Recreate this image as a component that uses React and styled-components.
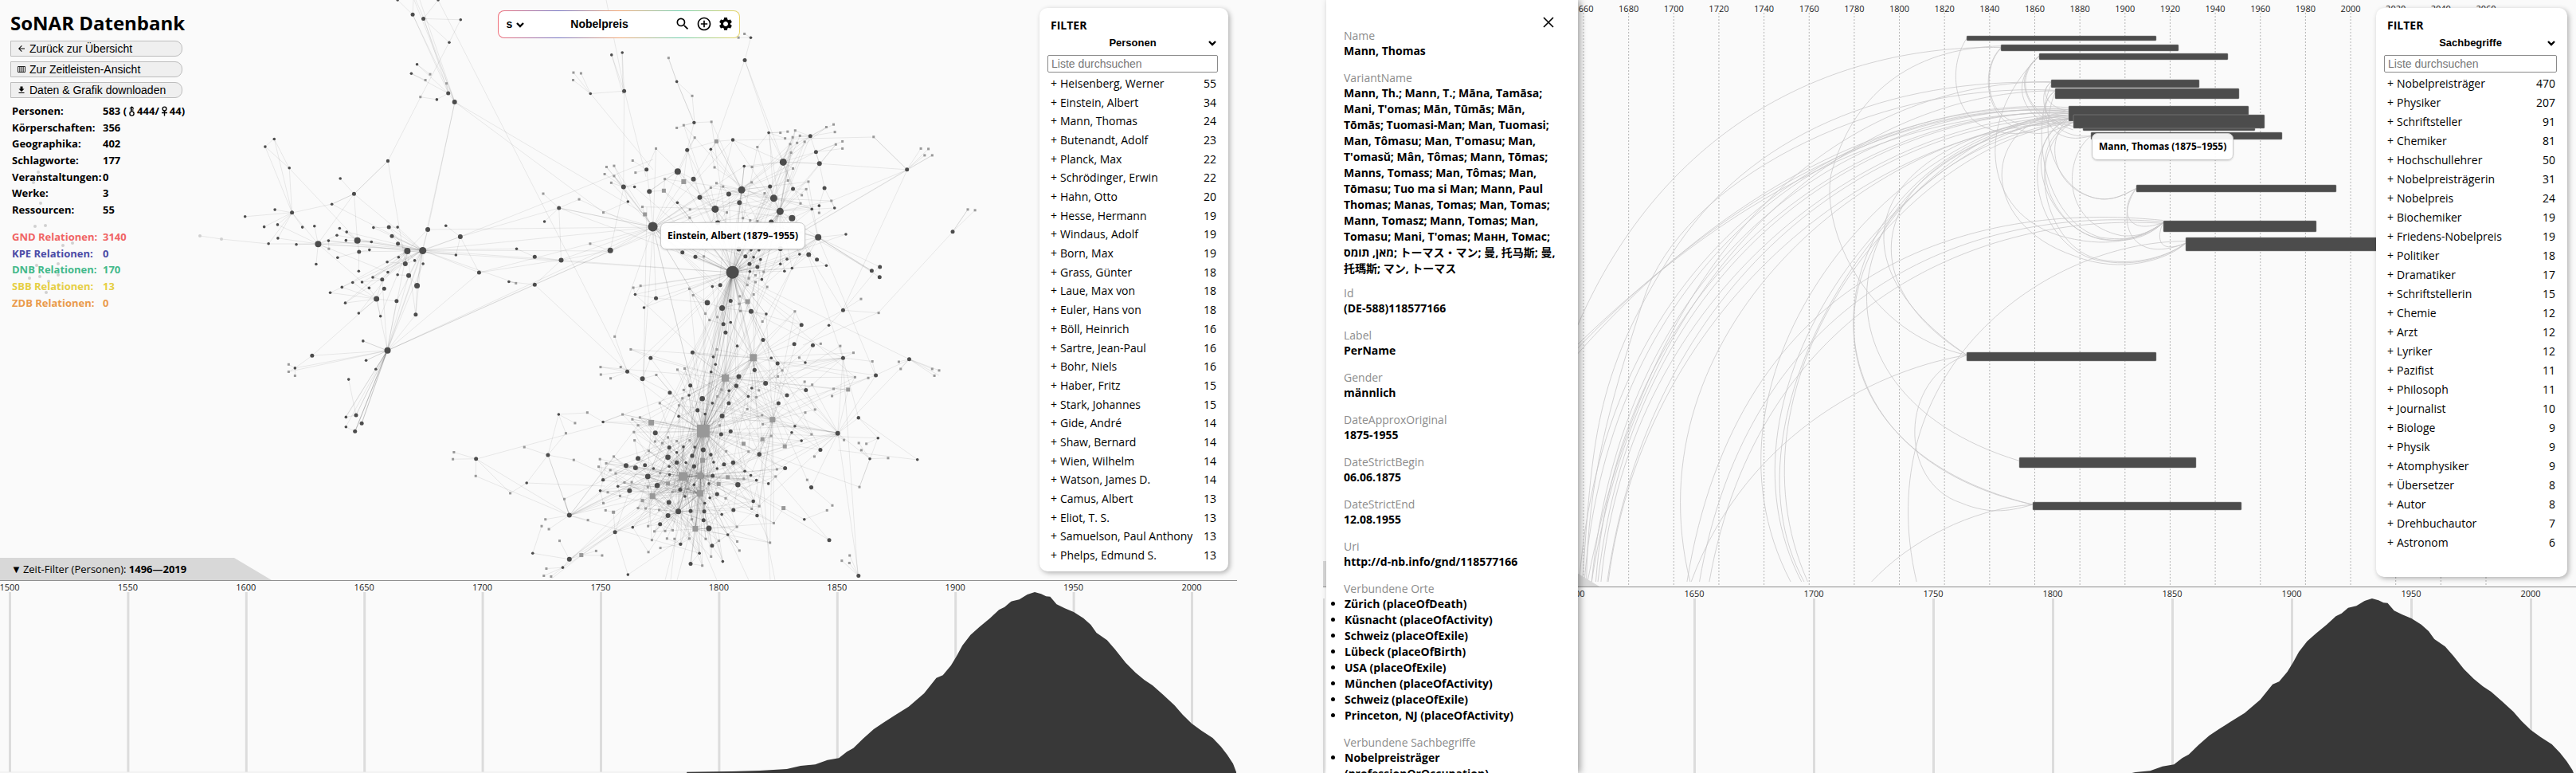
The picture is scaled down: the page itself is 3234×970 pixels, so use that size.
import React from "react";
import styled, { createGlobalStyle } from "styled-components";
import { MdSearch, MdAddCircleOutline, MdSettings, MdArrowBack, MdGetApp } from "react-icons/md";

const Global = createGlobalStyle`
  * { box-sizing: border-box; }
  body {
    margin: 0;
    background: #fafafa;
    color: #000;
    font-family: "Open Sans", "Noto Sans CJK JP", "Noto Sans CJK SC", sans-serif;
  }
`;

/* ---------- layout ---------- */

const Page = styled.main`
  display: grid;
  grid-template-columns: 1553fr 1573fr;
  column-gap: 108px;
  height: 100vh;
  overflow: hidden;
`;

const View = styled.section`
  display: grid;
  grid-template-rows: minmax(0, 1fr) ${(p) => p.$timeline}px;
  min-width: 0;
  height: 100vh;
`;

const Layers = styled.div`
  display: grid;
  grid-template-columns: minmax(0, 1fr);
  grid-template-rows: minmax(0, 1fr);
  position: relative;
  min-width: 0;
  min-height: 0;
  & > * { grid-area: 1 / 1; }
`;

const Drawing = styled.svg`
  display: block;
  width: 100%;
  height: 100%;
  overflow: hidden;
`;

const Overlay = styled.div`
  display: grid;
  grid-template-columns: 1fr auto 1fr;
  align-items: start;
  z-index: 1;
`;

const OverlayEnd = styled(Overlay)`
  grid-template-columns: 1fr;
`;

const Timeline = styled.div`
  min-width: 0;
  min-height: 0;
  border-top: 1px solid #8f8f8f;
  overflow: hidden;
`;

/* ---------- sidebar ---------- */

const Sidebar = styled.div`
  display: flex;
  flex-direction: column;
  width: 240px;
  padding: 12px 0 0 13px;
`;

const Title = styled.h1`
  margin: 0 0 6px;
  font-size: 24px;
  line-height: 33px;
  white-space: nowrap;
`;

const ActionButton = styled.button`
  display: flex;
  align-items: center;
  gap: 4px;
  width: 216px;
  height: 20px;
  margin-bottom: 6px;
  padding: 0 7px;
  border: 1px solid #bdbdbd;
  border-radius: 0 9px 9px 0;
  background: #efefef;
  color: #000;
  font: 14px "Liberation Sans", Arial, sans-serif;
  white-space: nowrap;
  svg { flex: none; }
`;

const Stats = styled.table`
  height: ${(p) => p.$height}px;
  margin: ${(p) => p.$top}px 0 0 2px;
  border-collapse: collapse;
  font-size: 13px;
  line-height: 18px;
  font-weight: 700;
  white-space: nowrap;
  th, td { padding: 0; text-align: left; }
  th { width: 114px; min-width: 114px; }
`;

const StatRow = styled.tr`
  color: ${(p) => p.$color || "#000"};
`;

const Sign = styled.svg`
  width: 9px;
  height: 13px;
  margin: 0 2px;
  vertical-align: -2px;
`;

/* ---------- search bar ---------- */

const SearchBar = styled.form`
  display: flex;
  align-items: center;
  width: 304px;
  height: 35px;
  margin-top: 13px;
  padding: 0 7px 2px 10px;
  border: 1px solid transparent;
  border-radius: 8px;
  background:
    linear-gradient(#fff, #fff) padding-box,
    linear-gradient(90deg, #f0707a, #7777c4 25%, #f2a878 50%, #74cfae 75%, #e8d468) border-box;
`;

const SearchName = styled.input`
  flex: 1;
  min-width: 0;
  padding: 0 6px 0 0;
  border: 0;
  background: none;
  text-align: center;
  font: 700 14px "Liberation Sans", Arial, sans-serif;
`;

const IconButton = styled.button`
  display: flex;
  padding: 0;
  margin-left: 7px;
  border: 0;
  background: none;
  color: #000;
`;

/* ---------- selects and filter card ---------- */

const SelectBox = styled.div`
  position: relative;
  width: ${(p) => (p.$small ? "36px" : "100%")};
  select {
    display: block;
    width: 100%;
    height: 18px;
    padding: 0 ${(p) => (p.$small ? 0 : 4)}px;
    border: 0;
    background: none;
    appearance: none;
    color: #000;
    font: 700 ${(p) => (p.$small ? 14 : 13)}px "Liberation Sans", Arial, sans-serif;
    text-align-last: ${(p) => (p.$small ? "left" : "center")};
  }
  svg {
    position: absolute;
    right: ${(p) => (p.$small ? 14 : 2)}px;
    top: 7px;
    pointer-events: none;
  }
`;

const FilterCard = styled.aside`
  display: flex;
  flex-direction: column;
  justify-self: end;
  width: ${(p) => p.$width}px;
  height: ${(p) => p.$height}px;
  margin: 10px 11px 0 0;
  padding: 12px ${(p) => p.$right}px 8px 10px;
  border-radius: 10px;
  background: #fff;
  box-shadow: 2px 2px 6px rgba(0, 0, 0, 0.3);
`;

const FilterTitle = styled.h2`
  margin: 0 0 2px 4px;
  font-size: 14px;
  line-height: 20px;
`;

const FilterInput = styled.input`
  width: 100%;
  height: 22px;
  margin: 7px 0 2px;
  padding: 0 4px;
  border: 1px solid #8a8a8a;
  border-radius: 2px;
  background: #fff;
  font: 14px "Liberation Sans", Arial, sans-serif;
  &::placeholder { color: #777; }
`;

const FilterList = styled.ul`
  flex: 1;
  display: grid;
  grid-auto-rows: ${(p) => (p.$fill ? "1fr" : "24px")};
  margin: 0;
  padding: 0 2px 0 4px;
  list-style: none;
  font-size: 14px;
  line-height: 20px;
`;

const FilterItem = styled.li`
  display: grid;
  grid-template-columns: 12px 1fr auto;
  align-items: center;
  white-space: nowrap;
`;

/* ---------- tooltip, tab, details ---------- */

const Tooltip = styled.div`
  position: absolute;
  left: ${(p) => p.$x}px;
  top: ${(p) => p.$y}px;
  z-index: 1;
  padding: 6px 8px;
  border: 1px solid #c9c9c9;
  border-radius: 7px;
  background: rgba(255, 255, 255, 0.92);
  box-shadow: 0 1px 2px rgba(0, 0, 0, 0.15);
  font-size: 12px;
  line-height: 20px;
  font-weight: 700;
  white-space: nowrap;
`;

const TimeTab = styled.button`
  align-self: end;
  justify-self: start;
  display: flex;
  align-items: center;
  gap: 2px;
  width: 341px;
  height: 28px;
  padding: 0 0 0 14px;
  border: 0;
  background: #d8d8d8;
  clip-path: polygon(0 0, 294px 0, 100% 100%, 0 100%);
  color: #000;
  font: 13px "Open Sans", sans-serif;
  white-space: nowrap;
`;

const WideTab = styled(TimeTab)`
  width: 347px;
  height: 32px;
`;

const Details = styled.aside`
  justify-self: start;
  z-index: 2;
  width: 316px;
  height: 100vh;
  margin-left: 4px;
  padding: 21px 24px 0 22px;
  overflow: hidden;
  background: #fff;
  box-shadow: 3px 0 8px rgba(0, 0, 0, 0.35);
`;

const Close = styled.button`
  display: block;
  height: 14px;
  margin: 0 6px 0 auto;
  padding: 0;
  border: 0;
  background: none;
`;

const Fields = styled.dl`
  margin: 0;
  font-size: 14px;
`;

const FieldLabel = styled.dt`
  color: #8c8c8c;
  line-height: 19px;
`;

const FieldValue = styled.dd`
  margin: 0 0 ${(p) => (p.$long ? 11 : 14)}px;
  font-weight: 700;
  line-height: 20px;
  ul { margin: 0; padding: 0 0 0 1px; }
`;

/* ---------- data ---------- */

const persons = [
  ["Heisenberg, Werner", 55], ["Einstein, Albert", 34], ["Mann, Thomas", 24], ["Butenandt, Adolf", 23],
  ["Planck, Max", 22], ["Schrödinger, Erwin", 22], ["Hahn, Otto", 20], ["Hesse, Hermann", 19],
  ["Windaus, Adolf", 19], ["Born, Max", 19], ["Grass, Günter", 18], ["Laue, Max von", 18],
  ["Euler, Hans von", 18], ["Böll, Heinrich", 16], ["Sartre, Jean-Paul", 16], ["Bohr, Niels", 16],
  ["Haber, Fritz", 15], ["Stark, Johannes", 15], ["Gide, André", 14], ["Shaw, Bernard", 14],
  ["Wien, Wilhelm", 14], ["Watson, James D.", 14], ["Camus, Albert", 13], ["Eliot, T. S.", 13],
  ["Samuelson, Paul Anthony", 13], ["Phelps, Edmund S.", 13],
];

const topics = [
  ["Nobelpreisträger", 470], ["Physiker", 207], ["Schriftsteller", 91], ["Chemiker", 81],
  ["Hochschullehrer", 50], ["Nobelpreisträgerin", 31], ["Nobelpreis", 24], ["Biochemiker", 19],
  ["Friedens-Nobelpreis", 19], ["Politiker", 18], ["Dramatiker", 17], ["Schriftstellerin", 15],
  ["Chemie", 12], ["Arzt", 12], ["Lyriker", 12], ["Pazifist", 11], ["Philosoph", 11],
  ["Journalist", 10], ["Biologe", 9], ["Physik", 9], ["Atomphysiker", 9], ["Übersetzer", 8],
  ["Autor", 8], ["Drehbuchautor", 7], ["Astronom", 6],
];

const relations = [
  ["GND Relationen:", "3140", "#f06464"], ["KPE Relationen:", "0", "#4b4ba6"],
  ["DNB Relationen:", "170", "#43b98a"], ["SBB Relationen:", "13", "#e6cf45"],
  ["ZDB Relationen:", "0", "#ea9a4c"],
];

const variants =
  "Mann, Th.; Mann, T.; Māna, Tamāsa; Mani, T'omas; Mān, Tūmās; Mān, Tōmās; Tuomasi-Man; Man, Tuomasi; Man, Tômasu; Man, T'omasu; Man, T'omasŭ; Mân, Tômas; Mann, Tōmas; Manns, Tomass; Man, Tômas; Man, Tōmasu; Tuo ma si Man; Mann, Paul Thomas; Manas, Tomas; Man, Tomas; Mann, Tomasz; Mann, Tomas; Man, Tomasu; Mani, T'omas; Манн, Томас; מאן, תומס; トーマス・マン; 曼, 托马斯; 曼, 托瑪斯; マン, トーマス";

const fields = [
  ["Name", "Mann, Thomas"],
  ["VariantName", variants],
  ["Id", "(DE-588)118577166"],
  ["Label", "PerName"],
  ["Gender", "männlich"],
  ["DateApproxOriginal", "1875-1955"],
  ["DateStrictBegin", "06.06.1875"],
  ["DateStrictEnd", "12.08.1955"],
  ["Uri", "http://d-nb.info/gnd/118577166"],
  ["Verbundene Orte", [
    "Zürich (placeOfDeath)", "Küsnacht (placeOfActivity)", "Schweiz (placeOfExile)", "Lübeck (placeOfBirth)",
    "USA (placeOfExile)", "München (placeOfActivity)", "Schweiz (placeOfExile)", "Princeton, NJ (placeOfActivity)",
  ]],
  ["Verbundene Sachbegriffe", ["Nobelpreisträger (professionOrOccupation)"]],
];

/* Network nodes: "x y size", grouped by cluster, in each cluster's own units. */
const parse = (text, sx, sy, dx, base, square) =>
  text.split(";").map((t) => {
    const [x, y, s] = t.trim().split(" ").map(Number);
    return { x: x / sx + dx, y: y / sy, s: s || base, square };
  });

const westPeople = "592 0;637 40 2.5;669 51 2.5;713 0;780 54;746 116;650 176;633 201;743 255 2.5;709 272;762 279 3;224 380;197 401;269 459;563 440 2.2;421 488;462 530 2.5;396 558;226 573;277 581 2.5;137 592;234 614;194 620;308 621;344 618;235 651;207 666;290 668;355 667 4;386 658;419 624;440 634;411 643;438 657;472 657 4;477 688 2.5;508 683;514 661;520 622;566 621 2.5;592 621;575 645 2.5;593 666 2.5;682 627 3;736 617;779 647 3;766 697;621 686 4;667 685 4.5;595 703;643 712;668 721;615 721 3;561 716;563 744;592 751;625 753 3;650 781 3.5;546 764 2.5;518 758;486 771;476 741;458 772;426 785;391 800;507 787;552 789 2.5;529 817 3.5;589 823 2.5;436 828;413 704;349 722;476 856;541 864;646 860 2.5;489 932;562 958 4;498 985;527 1009;446 1037;337 972 2.5;286 1006;438 1140;468 1135 2.5;438 1167;485 1157 2.5;465 1179 2.5;835 745 2.5;924 770;947 680;1001 702 2.5;1001 778 2.5;826 1254 2.5;977 1320;995 1512";
const westTopics = "689 203;675 219;738 228;660 265;387 680;267 996;267 1016;286 1027;760 1236;757 1255;825 1301;928 1348;970 1222;945 774";
const eastPeople = "222 146;256 140;155 249;262 242 2.5;429 217;664 100;645 160 2.5;484 326 2.2;462 399 2.5;537 397;607 372 2.2;721 353;853 362 2.5;871 404 2.5;882 435 3;767 431 4.5;643 442;432 456 4;482 476 3;333 451 2.5;260 497 3;295 497;342 509 3;274 536;502 525 3;431 539;594 516 3;635 505 4.5;628 539 3;551 556 4.5;559 592 3;725 496 2.5;798 502 2.5;737 527 4.5;757 562 4.5;795 580 4;898 500 2.5;858 556;881 547;930 553;729 590 3;878 631 4;966 623;819 676;848 677 3;874 690 2.5;904 706;1048 720 2.5;1074 710 2.5;1073 737 2.5;1160 451 2.5;1305 616 2.5;55 553 2.5;9 589;62 692 3;218 666 3.5;353 603 6;606 724 8;447 671 2.5;488 683 2.5;626 662 3;665 665;690 665;758 661 3;647 682 2.5;673 684;695 690;660 702 2.5;685 710 2.5;661 722;699 743;758 702;779 689;795 713;771 721;542 762;567 758 2.5;526 805 3.3;573 819 3.5;600 800 2.5;665 828 3;713 835;363 793 2.5;297 783;325 818;577 862 2.5;600 857;584 884 2.5;621 920;703 904 2.5;825 864 2.5;912 865;957 825 2.5;802 915 2.5;861 918 2.5;957 952 2.5;1167 955 2.5;1061 998 2.5;479 937 2.5;545 949;552 969;538 989;346 952 2.5;272 988 2.5;320 1007 3;729 952;749 966 2.5;837 964;676 984 2.6;626 1001 3;618 1026 2.6;711 1019 3;667 1032;656 1054;595 1039;594 1072 2.5;542 1072;752 1072 2.5;779 1051 2.5;839 1037 2.5;472 1025 2.5;468 1051;407 1044 2.5;510 1060 3.3;495 1091 2.6;519 1101;435 1107;573 1106 3;600 1147 2.5;570 1155 2.5;804 1133;794 1150;825 1172;885 1196 2.5;940 1152 3;1006 1111 2.2;1068 1165;1042 1220;1193 1222;54 1102;195 1122;20 1210 2.5;361 1151 3;405 1190 2.5;450 1188;486 1189;429 1203;513 1196 3;401 1216 3.3;306 1219 3;268 1238 3;298 1244 3;328 1237 2.5;355 1246;429 1230 2.6;458 1230;478 1212 2.6;484 1240 2.6;405 1240;337 1267 3.3;406 1262;195 1276 2.2;242 1293;279 1305 3;186 1305;367 1291 3.3;440 1302 2.5;455 1320;484 1289;546 1229;537 1209 2.2;557 1246;579 1235 2.5;608 1230 2.7;543 1265 2.5;531 1286;557 1314 2.6;534 1324;518 1338;691 1208 2.8;645 1253;664 1264;682 1277;720 1286;773 1245 2.5;623 1289 3.2;856 1296 2.6;672 1333 2.3;684 1371 2.3;609 1356 2.5;572 1368;404 1336 3;434 1360 3.5;473 1359 2.5;516 1360 2.5;401 1371 3;376 1394 2.5;514 1383 2.5;531 1405 3.5;591 1422;541 1451 2.5;441 1447 2.2;501 1471;473 1499 2.5;575 1493;289 1402;233 1415 2.5;88 1370 3;88 1487 3;67 1509;274 1528;834 1381;913 1436 2.5;1006 1531 2.5";
const eastTopics = "101 193;125 195;100 213;403 154;625 100;644 90;478 255;539 324;429 340;451 333;486 366;555 376 5;363 395;289 427;206 444;230 441;200 463;230 468;221 486;298 459;391 476;451 483 6;388 507 5;320 550;328 570 5;196 565;119 530;5 515;154 648;549 445;555 487;537 499;576 496;685 391;668 444;667 485;758 353;781 350;805 347;773 368;797 365;820 361;789 383;811 380;835 377;792 406;798 448;782 480;847 483;826 519;840 503;822 541;881 566;920 534;904 338;927 331;931 351;934 384;955 376;955 395;1054 364;1204 395;1228 396;1216 413;1240 413;1353 557;1376 559;588 565;471 557;470 579;639 580;662 586;685 588;708 514;515 682;679 732;705 723;658 740;679 750;653 758;716 763;673 783;629 788;654 802 6;627 808;631 827;469 768;481 785;520 834;533 851;558 843;701 855;804 828;291 765;314 760;232 895;283 929;187 976;188 996;219 1006;251 976;364 997;431 983;454 980;556 929;672 951 9;583 1005 9;733 1116 7;513 1146 16;449 1267 11;504 1265 8;503 1312 8;511 1224 6;352 1319 7;488 1406 7;348 1124 7;641 1180 5;701 1168 5;772 1187 5;591 1269 5;562 1287 5;401 1286 5;320 1331 4;228 1362 4;126 1476 5;768 1351 5;973 1036 5;818 951;764 985;750 1001;886 914;948 920;990 938;1050 961;1134 962;1140 981;1240 981;1247 999;1262 985;1014 795;1070 832;995 1003;1037 1005;835 1015;859 1023;927 1034;922 1053;868 1089;837 1097;857 1155;866 1214;960 1170;1007 1178;1031 1180;1015 1197;1100 1218;1009 1295;843 1276;906 1357;923 1344;953 1491;978 1477;977 1497;690 1038;682 1056;653 1088;700 1104;702 1128;729 1159;657 1201;747 1248;743 1267;642 1273;667 1353;691 1346;737 1391;725 1443;620 1401;621 1440;628 1464;563 1438;538 1480;510 1504;586 1200;584 1325;565 1131;558 1054;571 1036;451 1037;447 1059;436 1078;375 1072;257 1102;288 1115;312 1110;306 1131;293 1149;295 1171;145 1097;106 1125;77 1152;102 1223;185 1221;181 1241;205 1232;229 1214;218 1250;235 1259;401 1163;383 1178;360 1174;340 1199;429 1173;470 1171;376 1258;263 1283;286 1282;249 1319;210 1309;196 1338;203 1357;306 1351;330 1352;373 1356;337 1295;415 1308;464 1300;338 1399;358 1413;392 1412;416 1410;350 1436;398 1432;422 1433;469 1432;521 1433;377 1457;339 1468;477 1381;72 1327;12 1381;0 1399;23 1407;57 1438;147 1383;173 1465;192 1477;15 1512;7 1531;30 1533";

const nodes = [
  ...parse(westTopics, 2.376, 2.178, 250, 3, true),
  ...parse(eastTopics, 2.529, 2.119, 680, 3, true),
  ...parse(westPeople, 2.376, 2.178, 250, 1.8, false),
  ...parse(eastPeople, 2.529, 2.119, 680, 1.8, false),
];

const faintNodes = [
  [48, 216], [42, 229], [51, 255], [44, 284], [57, 283], [91, 305], [79, 308], [46, 333], [73, 331],
  [37, 349], [50, 347], [73, 345], [61, 353], [58, 367], [74, 358], [251, 296], [278, 300],
];

const weight = (n) => (n.square ? n.s / 2 : n.s);
const distance = (a, b) => Math.hypot(a.x - b.x, a.y - b.y);
const chance = (i, j) => {
  const v = Math.sin(i * 127.1 + j * 311.7) * 43758.5453;
  return v - Math.floor(v);
};

/* Hubs: x, y, reach, share of the nodes in reach that are linked. */
const hubs = [
  [530, 314, 130, 0.55], [511, 315, 110, 0.3], [399, 306, 100, 0.25], [486, 440, 130, 0.3],
  [920, 342, 130, 0.55], [920, 342, 300, 0.12], [820, 285, 150, 0.3], [898, 262, 110, 0.2],
  [931, 238, 110, 0.25], [979, 265, 110, 0.35], [971, 249, 90, 0.3], [983, 203, 70, 0.3],
  [1027, 298, 110, 0.18], [883, 541, 130, 0.5], [883, 541, 280, 0.14], [858, 598, 130, 0.4],
  [879, 597, 120, 0.35], [879, 619, 130, 0.35], [946, 449, 170, 0.18], [910, 474, 170, 0.22],
  [970, 527, 160, 0.15], [852, 642, 130, 0.2], [873, 664, 120, 0.2], [813, 598, 110, 0.15],
  [819, 622, 120, 0.15], [715, 647, 170, 0.1], [1058, 449, 200, 0.05], [1052, 543, 200, 0.05],
];

const edges = [];
nodes.forEach((n, i) => {
  let best = null;
  nodes.forEach((m) => {
    if (weight(m) > weight(n) + 0.1) {
      const d = distance(n, m);
      if (d < 160 && (!best || d < best.d)) best = { m, d };
    }
  });
  if (best) edges.push([n.x, n.y, best.m.x, best.m.y]);
  hubs.forEach(([x, y, reach, share], j) => {
    const d = Math.hypot(n.x - x, n.y - y);
    if (d < reach && chance(i + 1, j + 1) < share) edges.push([n.x, n.y, x, y]);
  });
});

const longEdges = [
  [530, 314, 820, 285], [537, 288, 820, 285], [530, 314, 766, 315], [578, 297, 702, 261], [578, 297, 820, 200],
  [702, 261, 820, 285], [511, 315, 920, 342], [530, 314, 920, 342], [399, 306, 530, 314], [602, 342, 820, 285],
  [602, 342, 704, 326], [704, 326, 820, 285], [486, 440, 602, 342], [486, 440, 671, 357], [486, 440, 766, 315],
  [486, 440, 820, 285], [486, 440, 434, 523], [486, 440, 434, 536], [486, 440, 446, 541], [486, 440, 454, 531],
  [486, 440, 446, 541], [486, 440, 530, 314], [486, 440, 511, 315], [486, 440, 513, 346], [671, 357, 788, 466],
  [671, 357, 766, 315], [550, 0, 788, 466], [571, 128, 810, 269], [571, 128, 757, 266], [571, 128, 537, 288],
  [571, 128, 536, 288], [520, 0, 571, 128], [527, 0, 571, 128], [518, 18, 563, 117], [532, 23, 563, 117],
  [519, 0, 518, 18], [522, 0, 532, 23], [578, 25, 564, 53], [564, 53, 528, 122], [528, 122, 487, 202],
  [487, 202, 445, 243], [487, 202, 509, 331], [445, 243, 417, 256], [417, 256, 367, 267], [344, 174, 333, 184],
  [344, 174, 363, 211], [333, 184, 363, 211], [363, 211, 449, 302], [251, 296, 278, 300], [278, 300, 337, 306],
  [337, 306, 399, 306], [392, 446, 472, 375], [1139, 213, 1097, 172], [1139, 213, 1044, 252], [1139, 213, 1058, 389],
  [1196, 291, 1103, 392], [1103, 392, 1008, 433], [1196, 291, 1215, 263], [1058, 390, 1103, 335], [1022, 298, 1094, 340],
  [935, 75, 899, 177], [935, 75, 966, 167], [1097, 172, 920, 176], [966, 167, 971, 249], [741, 117, 820, 213],
  [782, 118, 768, 69], [782, 118, 781, 66], [784, 114, 811, 222], [761, 0, 784, 114], [850, 103, 839, 73],
  [850, 103, 871, 154], [869, 120, 872, 154], [598, 576, 756, 533], [598, 576, 641, 619], [661, 606, 760, 610],
  [701, 520, 737, 518], [688, 571, 710, 544], [688, 571, 715, 647], [1077, 724, 1058, 449], [973, 728, 950, 610],
  [967, 728, 955, 560], [1058, 449, 996, 265], [1152, 577, 1052, 565], [1142, 451, 1179, 471], [1099, 471, 1142, 451],
  [1041, 678, 940, 560], [1102, 550, 1079, 611], [1078, 525, 1058, 449], [808, 475, 812, 260], [807, 475, 820, 285],
  [920, 342, 1142, 451], [1027, 298, 1099, 471], [715, 702, 858, 598], [715, 702, 820, 640], [707, 712, 858, 610],
  [690, 728, 858, 598], [715, 647, 813, 598], [920, 342, 883, 541], [931, 238, 883, 541], [820, 285, 883, 541],
  [835, 728, 883, 541], [850, 728, 879, 619], [900, 728, 873, 664], [940, 728, 879, 597], [842, 728, 852, 642],
  [766, 315, 931, 238], [766, 315, 898, 262], [783, 235, 766, 315], [850, 215, 783, 235], [850, 215, 815, 240],
  [863, 188, 900, 177], [863, 188, 879, 248], [863, 188, 858, 228], [899, 177, 931, 238], [920, 176, 898, 262],
];

/* ---------- drawings ---------- */

function NetworkGraph() {
  return (
    <Drawing viewBox="0 0 1553 728" preserveAspectRatio="xMinYMin meet" role="img" aria-label="Netzwerk">
      <g stroke="#000" strokeOpacity="0.08">
        {[...edges, ...longEdges].map(([a, b, c, d], i) => (
          <line key={i} x1={a} y1={b} x2={c} y2={d} />
        ))}
      </g>
      {faintNodes.map(([x, y], i) => (
        <circle key={i} cx={x} cy={y} r="2" fill="#d0d0d0" />
      ))}
      {nodes.map((n, i) =>
        n.square ? (
          <rect key={i} x={n.x - n.s / 2} y={n.y - n.s / 2} width={n.s} height={n.s} fill="#989898" />
        ) : (
          <circle key={i} cx={n.x} cy={n.y} r={n.s} fill="#4c4c4c" />
        )
      )}
    </Drawing>
  );
}

const bars = [
  [2469, 45, 2707, 51], [2512, 56, 2735, 64], [2560, 67, 2797, 75], [2575, 100, 2761, 110], [2580, 111, 2811, 124],
  [2597, 133, 2823, 152], [2615, 158, 2831, 164], [2603, 144, 2843, 161], [2625, 166, 2865, 175], [2682, 232, 2933, 241],
  [2716, 277, 2908, 291], [2744, 298, 3010, 315], [2469, 442, 2707, 453], [2535, 574, 2757, 587], [2552, 630, 2814, 640],
];

const arcs = [
  "M752 103C715 180 725 310 790 345S900 345 946 320",
  "M818 128C500 120 170 330 0 880",
  "M818 124C640 130 530 260 490 470C470 620 560 900 752 957",
  "M818 128C780 180 785 300 840 340S920 350 957 330", "M818 130C782 180 790 290 830 320S900 340 948 318",
  "M892 150C850 200 845 270 890 320", "M892 150C852 195 848 260 915 340", "M892 152C848 200 850 300 957 350",
  "M948 300C700 270 350 430 0 940", "M948 296C700 260 340 420 0 955", "M948 306C690 290 360 440 0 930",
  "M914 222C600 210 330 360 180 690S30 1200 10 1568", "M914 220C560 220 160 560 20 1568",
  "M922 245C580 240 130 640 28 1568", "M922 243C560 220 200 500 130 800S20 1300 18 1568",
  "M948 290C620 250 60 560 4 1568", "M948 300C500 250 60 720 14 1568", "M948 305C560 280 80 720 36 1568",
  "M948 300C560 300 110 700 40 1568", "M948 310C570 310 100 780 46 1568", "M948 315C560 330 140 760 58 1568",
  "M957 330C600 330 130 800 60 1568", "M948 295C540 270 90 680 28 1568",
  "M948 320C560 350 100 900 218 1568", "M948 310C620 330 200 1000 412 1568", "M948 315C630 370 240 1050 433 1568",
  "M957 330C640 380 270 1020 445 1568", "M948 305C640 330 255 1100 438 1568",
  "M948 310C560 380 480 700 752 957", "M948 318C580 400 500 740 752 957", "M948 320C500 400 400 1050 853 1242",
  "M948 310C460 400 360 1200 879 1360", "M957 325C470 430 350 1180 879 1360",
  "M1131 598C750 550 330 800 236 1568", "M1131 594C760 540 310 720 212 1568", "M1131 602C780 570 350 820 255 1568",
  "M1175 650C900 650 560 1000 655 1568",
  "M752 957C620 1020 620 1300 740 1355C800 1390 840 1375 879 1360", "M752 957C600 990 330 1150 220 1568",
  "M879 1360C760 1370 640 1460 568 1568",
  "M922 250C885 380 930 500 990 530C1030 550 1060 520 1079 508", "M948 320C900 380 920 500 990 530C1030 550 1060 520 1079 508",
  "M948 320C850 380 900 600 1000 640C1060 660 1100 640 1131 600", "M957 330C860 380 900 610 1010 645C1060 655 1100 630 1131 600",
  "M914 230C870 380 910 600 1010 640C1060 650 1100 640 1131 600", "M892 150C760 330 780 600 960 645C1050 670 1100 630 1131 600",
  "M948 320C840 400 890 660 1000 700C1080 725 1140 690 1175 655", "M957 330C860 400 900 670 1010 700C1080 718 1140 690 1175 655",
  "M946 300C780 330 770 600 960 690C1050 740 1140 700 1175 655",
  "M1079 508C1050 550 1050 640 1131 600", "M1079 508C1040 580 1060 720 1175 655", "M1131 600C1120 630 1115 690 1175 655",
  "M992 366C940 420 930 600 1050 635C1090 640 1110 620 1131 600", "M914 222C880 260 910 380 992 366",
  "M922 245C880 290 910 400 992 366", "M922 245C890 280 900 330 957 340", "M914 222C890 250 910 290 948 300",
];

function LifeSpans() {
  const ticks = Array.from({ length: 21 }, (_, i) => ({ year: 1660 + i * 20, x: 327 + i * 56.65 }));
  return (
    <Drawing viewBox="0 0 1573 736" preserveAspectRatio="xMinYMin meet" role="img" aria-label="Zeitleiste">
      {ticks.map((t) => (
        <g key={t.year}>
          <line x1={t.x} x2={t.x} y1="16" y2="736" stroke="#b5b5b5" strokeDasharray="2 2" />
          <text x={t.x} y="15" textAnchor="middle" fontSize="11" fill="#222">{t.year}</text>
        </g>
      ))}
      <g transform="translate(319 0) scale(.6506 .4656)" fill="none" stroke="#c6c4c6" strokeOpacity="0.75">
        {arcs.map((d, i) => (
          <path key={i} d={d} vectorEffect="non-scaling-stroke" />
        ))}
      </g>
      {bars.map(([a, b, c, d], i) => (
        <rect key={i} x={a - 1661} y={b} width={c - a} height={d - b} rx="1" fill="#4c4c4c" stroke="#909090" strokeWidth="0.5" />
      ))}
    </Drawing>
  );
}

const histogram = [
  [845, 866], [900, 864], [935, 861], [968, 855], [985, 843], [1003, 838], [1018, 821], [1032, 814], [1042, 790],
  [1050, 776], [1062, 740], [1075, 705], [1087, 680], [1100, 655], [1118, 620], [1137, 570], [1152, 512], [1160, 502],
  [1170, 465], [1177, 430], [1184, 390], [1194, 350], [1205, 320], [1218, 287], [1229, 256], [1236, 245], [1244, 224],
  [1254, 217], [1264, 198], [1273, 189], [1281, 196], [1287, 205], [1292, 206], [1300, 235], [1310, 250], [1321, 264],
  [1333, 287], [1342, 312], [1349, 342], [1362, 370], [1372, 405], [1385, 455], [1397, 492], [1408, 520], [1418, 540],
  [1431, 575], [1445, 615], [1455, 650], [1466, 683], [1478, 710], [1492, 738], [1502, 770], [1510, 802], [1517, 835],
  [1521, 866], [1521, 880], [845, 880],
];

function TimeHistogram({ width, height, start, step, first }) {
  const points = histogram
    .map(([x, y]) => `${(start + ((x / 0.98 - 12) * step) / 148.4).toFixed(1)},${(y / 3 - 49).toFixed(1)}`)
    .join(" ");
  const ticks = Array.from({ length: 11 }, (_, i) => ({ year: 1500 + i * 50, x: start + i * step }));
  return (
    <Drawing viewBox={`0 0 ${width} ${height}`} preserveAspectRatio="xMinYMin meet" role="img" aria-label="Zeit-Filter">
      {first && <rect x="0" y="14" width="2" height={height} fill="#dcdcdc" />}
      {ticks.map((t) => (
        <g key={t.year}>
          <rect x={t.x - 1} y="14" width="3" height="226" fill="#dcdcdc" />
          <text x={t.x} y="12" textAnchor="middle" fontSize="11" fill="#222">{t.year}</text>
        </g>
      ))}
      <line x1="0" x2={width} y1="240" y2="240" stroke="#ececec" />
      <polygon points={points} fill="#383838" />
    </Drawing>
  );
}

const Chevron = () => (
  <svg width="10" height="7" viewBox="0 0 10 7" fill="none" stroke="#000" strokeWidth="2.4" aria-hidden="true">
    <path d="M1 1L5 5L9 1" />
  </svg>
);

const GridIcon = () => (
  <svg width="12" height="12" viewBox="0 0 12 12" fill="none" stroke="#222" aria-hidden="true">
    <path d="M1.5 2.5h9v7h-9zM3.8 2.5v7M6 2.5v7M8.2 2.5v7" />
  </svg>
);

/* ---------- parts ---------- */

function Filter({ id, options, items, ...card }) {
  return (
    <FilterCard $width={card.width} $height={card.height} $right={card.right}>
      <FilterTitle>FILTER</FilterTitle>
      <SelectBox>
        <select id={id} aria-label="Filterkategorie" defaultValue={options}>
          <option>{options}</option>
        </select>
        <Chevron />
      </SelectBox>
      <FilterInput aria-label="Liste durchsuchen" placeholder="Liste durchsuchen" />
      <FilterList $fill={card.fill}>
        {items.map(([name, count]) => (
          <FilterItem key={name}>
            <span>+</span>
            <span>{name}</span>
            <span>{count}</span>
          </FilterItem>
        ))}
      </FilterList>
    </FilterCard>
  );
}

function DatabaseSidebar() {
  return (
    <Sidebar>
      <Title>SoNAR Datenbank</Title>
      <ActionButton><MdArrowBack size={12} />Zurück zur Übersicht</ActionButton>
      <ActionButton><GridIcon />Zur Zeitleisten-Ansicht</ActionButton>
      <ActionButton><MdGetApp size={12} />Daten &amp; Grafik downloaden</ActionButton>
      <Stats $height={144} $top={0}>
        <tbody>
          <StatRow>
            <th scope="row">Personen:</th>
            <td>
              583 (
              <Sign viewBox="0 0 9 13" fill="none" stroke="#000" aria-label="männlich">
                <circle cx="4.5" cy="9.5" r="2.6" strokeWidth="1.4" />
                <path d="M4.5 7V1M2 3.4L4.5 1L7 3.4M2.4 5h4.2" strokeWidth="1.2" />
              </Sign>
              444/
              <Sign viewBox="0 0 9 13" fill="none" stroke="#000" aria-label="weiblich">
                <circle cx="4.5" cy="3.5" r="2.4" strokeWidth="1.4" />
                <path d="M4.5 6V12.5M1 8.5h7" strokeWidth="1.4" />
              </Sign>
              44)
            </td>
          </StatRow>
          {[["Körperschaften:", 356], ["Geographika:", 402], ["Schlagworte:", 177], ["Veranstaltungen:", 0], ["Werke:", 3], ["Ressourcen:", 55]].map(([k, v]) => (
            <StatRow key={k}><th scope="row">{k}</th><td>{v}</td></StatRow>
          ))}
        </tbody>
      </Stats>
      <Stats $height={103} $top={14}>
        <tbody>
          {relations.map(([k, v, color]) => (
            <StatRow key={k} $color={color}><th scope="row">{k}</th><td>{v}</td></StatRow>
          ))}
        </tbody>
      </Stats>
    </Sidebar>
  );
}

export default function App() {
  return (
    <>
      <Global />
      <Page>
        <View $timeline={242}>
          <Layers>
            <NetworkGraph />
            <TimeTab>▼ <span>Zeit-Filter (Personen): <b>1496—2019</b></span></TimeTab>
            <Overlay>
              <DatabaseSidebar />
              <SearchBar onSubmit={(e) => e.preventDefault()}>
                <SelectBox $small>
                  <select aria-label="Feld" defaultValue="s"><option>s</option></select>
                  <Chevron />
                </SelectBox>
                <SearchName aria-label="Suchbegriff" defaultValue="Nobelpreis" />
                <IconButton type="submit" aria-label="Suchen"><MdSearch size={20} /></IconButton>
                <IconButton type="button" aria-label="Hinzufügen"><MdAddCircleOutline size={20} /></IconButton>
                <IconButton type="button" aria-label="Einstellungen"><MdSettings size={20} /></IconButton>
              </SearchBar>
              <Filter id="persons" options="Personen" items={persons} width={237} height={707} right={13} fill />
            </Overlay>
            <Tooltip $x={829} $y={279}>Einstein, Albert (1879–1955)</Tooltip>
          </Layers>
          <Timeline>
            <TimeHistogram width={1553} height={241} start={12} step={148.4} />
          </Timeline>
        </View>
        <Layers>
          <View $timeline={234}>
            <Layers>
              <LifeSpans />
              <WideTab aria-label="Zeit-Filter" />
              <OverlayEnd>
                <Filter id="topics" options="Sachbegriffe" items={topics} width={240} height={714} right={13} />
              </OverlayEnd>
              <Tooltip $x={965} $y={167}>Mann, Thomas (1875–1955)</Tooltip>
            </Layers>
            <Timeline>
              <TimeHistogram width={1573} height={233} start={16} step={150} first />
            </Timeline>
          </View>
          <Details>
            <Close aria-label="Schließen">
              <svg width="14" height="14" viewBox="0 0 14 14" stroke="#000" strokeWidth="1.6" aria-hidden="true">
                <path d="M1 1L13 13M13 1L1 13" />
              </svg>
            </Close>
            <Fields>
              {fields.map(([label, value]) => (
                <React.Fragment key={label}>
                  <FieldLabel>{label}</FieldLabel>
                  <FieldValue $long={value.length > 100}>
                    {Array.isArray(value) ? <ul>{value.map((v, i) => <li key={i}>{v}</li>)}</ul> : value}
                  </FieldValue>
                </React.Fragment>
              ))}
            </Fields>
          </Details>
        </Layers>
      </Page>
    </>
  );
}
